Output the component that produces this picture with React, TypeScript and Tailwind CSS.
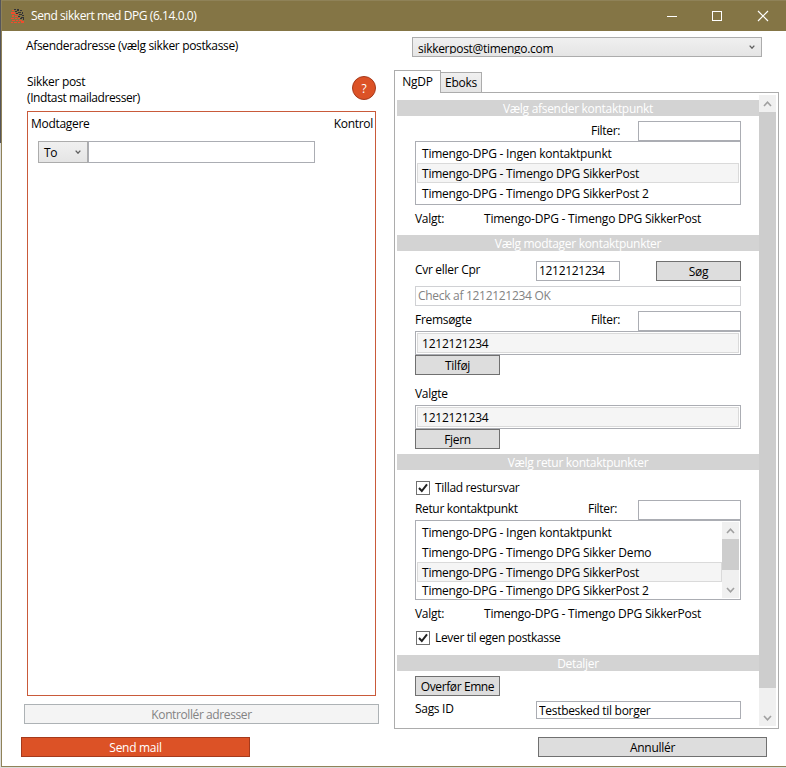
import { useState } from "react";
import type { ReactNode } from "react";

const senders = [
  "Timengo-DPG - Ingen kontaktpunkt",
  "Timengo-DPG - Timengo DPG SikkerPost",
  "Timengo-DPG - Timengo DPG SikkerPost 2",
];

const returns = [
  "Timengo-DPG - Ingen kontaktpunkt",
  "Timengo-DPG - Timengo DPG Sikker Demo",
  "Timengo-DPG - Timengo DPG SikkerPost",
  "Timengo-DPG - Timengo DPG SikkerPost 2",
];

function Chevron({ up = false, small = false }: { up?: boolean; small?: boolean }) {
  return (
    <svg
      width={small ? 6 : 9}
      height={small ? 4 : 6}
      viewBox="0 0 9 6"
      fill="none"
      stroke={small ? "#606060" : "#a0a0a0"}
      strokeWidth={small ? 2 : 1.6}
    >
      <path d={up ? "M1 5 L4.5 1.2 L8 5" : "M1 1 L4.5 4.8 L8 1"} />
    </svg>
  );
}

function Bar({ children }: { children: ReactNode }) {
  return <div className="h-4 w-[362px] shrink-0 bg-[#d3d3d3] text-center leading-[18px] text-white">{children}</div>;
}

function Button({ className, children }: { className: string; children: ReactNode }) {
  return (
    <button className={"flex h-5 shrink-0 items-center justify-center whitespace-nowrap border border-[#707070] bg-[#dddddd] " + className}>
      <span className="pt-px">{children}</span>
    </button>
  );
}

function Input({ className, value = "" }: { className: string; value?: string }) {
  return <input className={"shrink-0 border border-[#abadb3] bg-white px-[2px] outline-none " + className} defaultValue={value} />;
}

function Row({ text, selected, className = "leading-[19px]" }: { text: string; selected: boolean; className?: string }) {
  return (
    <div className={(selected ? "border-[#dadada] bg-[#f5f5f5] " : "border-transparent ") + "h-5 shrink-0 whitespace-nowrap border pl-1 tracking-[-0.22px] " + className}>
      {text}
    </div>
  );
}

function ScrollBar({ className, thumb }: { className: string; thumb: string }) {
  return (
    <div className={"flex w-[17px] shrink-0 flex-col bg-[#f0f0f0] " + className}>
      <div className="flex h-[17px] shrink-0 items-center justify-center"><Chevron up /></div>
      <div className={"bg-[#cdcdcd] " + thumb} />
      <div className="mt-auto flex h-[17px] shrink-0 items-center justify-center"><Chevron /></div>
    </div>
  );
}

function Check({ label }: { label: string }) {
  const [on, setOn] = useState(true);
  return (
    <div className="flex h-[15px] items-center pl-[19px]" onClick={() => setOn(!on)}>
      <svg width="14" height="14" viewBox="0 0 14 14" fill="none">
        <rect x="0.5" y="0.5" width="13" height="13" fill="#fff" stroke="#707070" />
        {on && <path d="M3 7 L5.8 10 L11 3.3" stroke="#212121" strokeWidth="2" />}
      </svg>
      <span className="ml-[5px] tracking-[-0.33px]">{label}</span>
    </div>
  );
}

function TitleBar() {
  return (
    <div className="flex h-[31px] shrink-0 items-center border-t border-[#8f8258] bg-[#847545] text-white">
      <svg className="ml-2" width="16" height="16" viewBox="0 0 16 16">
        <path d="M4 1h2v1H4z M7 1h2v2H7z M10 2h2v1h-2z M5 3h2v1H5z M8 4h3v1H8z M12 4h1v2h-1z M9 6h2v1H9z M12 7h2v1h-2z M8 8h2v1H8z M11 9h3v1h-3z M10 6h2v1h-2z M13 10h1v2h-1z M6 5h2v1H6z M10 10h2v1h-2z" fill="#333236" />
        <path d="M2 2h2v1H2z M1 4h4v2H1z M5 6h3v1H5z M2 7h2v2H2z M5 8h3v1H5z M1 10h3v1H1z M5 10h2v1H5z M8 10h2v1H8z M2 12h3v1H2z M6 12h2v1H6z M9 12h3v1H9z M1 14h2v1H1z M4 14h3v1H4z M8 14h2v1H8z M11 13h3v2h-3z" fill="#f04c2c" />
      </svg>
      <span className="ml-[5px] tracking-[-0.42px]">Send sikkert med DPG (6.14.0.0)</span>
      <svg className="ml-auto mr-[17px]" width="102" height="12" viewBox="0 0 102 12" fill="none" stroke="#fff">
        <path d="M0 6.5 H10" />
        <rect x="45.5" y="1.5" width="9" height="9" />
        <path d="M91 1 L101 11 M101 1 L91 11" strokeWidth="1.2" />
      </svg>
    </div>
  );
}

function Recipients() {
  return (
    <div className="w-[393px] shrink-0">
      <div className="flex h-[50px] pl-[25px]">
        <div className="w-[325px] pt-[13px] leading-4">
          Sikker post<br /><span className="tracking-[-0.4px]">(Indtast mailadresser)</span>
        </div>
        <button className="mt-[15px] h-6 w-6 rounded-full border border-[#a53a1c] bg-[#dc5226] pt-px text-white">?</button>
      </div>
      <div className="ml-[25px] h-[585px] w-[349px] border border-[#c95a3a]">
        <div className="flex justify-between pl-[3px] pr-[2px] pt-1 leading-4">
          <span>Modtagere</span>
          <span>Kontrol</span>
        </div>
        <div className="ml-[10px] mt-[9px] flex">
          <div className="flex h-[22px] w-[50px] items-center justify-between border border-[#acacac] bg-linear-to-b from-[#f0f0f0] to-[#e5e5e5] pl-[5px] pr-[6px]">
            <span className="pt-[2px]">To</span>
            <Chevron small />
          </div>
          <Input className="h-[22px] w-[227px]" />
        </div>
      </div>
      <button className="ml-[22px] mt-2 block h-5 w-[355px] border border-[#adb2b5] bg-[#f4f4f4] pt-px leading-[18px] tracking-[-0.4px] text-[#838383]">
        Kontrollér adresser
      </button>
    </div>
  );
}

function ContactPoints() {
  return (
    <div className="w-[362px]">
      <div className="h-[5px]" />
      <Bar>Vælg afsender kontaktpunkt</Bar>
      <div className="mt-[5px] flex h-5 pl-[194px]">
        <span className="w-[47px] leading-[19px]">Filter:</span>
        <Input className="h-5 w-[103px]" />
      </div>
      <div className="ml-[18px] h-16 w-[326px] border border-[#abadb3] p-px">
        {senders.map((s, i) => <Row key={s} text={s} selected={i === 1} />)}
      </div>
      <div className="flex h-[30px] pl-[18px] leading-7">
        <span className="w-[69px]">Valgt:</span>
        <span className="tracking-[-0.22px]">Timengo-DPG - Timengo DPG SikkerPost</span>
      </div>

      <Bar>Vælg modtager kontaktpunkter</Bar>
      <div className="mt-[10px] flex h-5 pl-[18px]">
        <span className="w-[121px] leading-[18px]">Cvr eller Cpr</span>
        <Input className="h-5 w-[84px] pb-px" value="1212121234" />
        <Button className="ml-9 w-[85px]">Søg</Button>
      </div>
      <div className="ml-[18px] mt-[5px] h-5 w-[326px] border border-[#d0d1d4] pl-[2px] leading-[18px] text-[#838383]">Check af 1212121234 OK</div>
      <div className="mt-[5px] flex h-5 pl-[18px] leading-[18px]">
        <span className="w-[176px]">Fremsøgte</span>
        <span className="w-[47px]">Filter:</span>
        <Input className="h-5 w-[103px]" />
      </div>
      <div className="ml-[18px] h-6 w-[326px] border border-[#abadb3] p-px">
        <Row text="1212121234" selected className="leading-[19px] tracking-[-0.4px]" />
      </div>
      <Button className="ml-[18px] w-[85px]">Tilføj</Button>
      <div className="h-[30px] pl-[18px] pt-[11px] leading-4">Valgte</div>
      <div className="ml-[18px] h-6 w-[326px] border border-[#abadb3] p-px">
        <Row text="1212121234" selected className="leading-[19px] tracking-[-0.4px]" />
      </div>
      <Button className="ml-[18px] w-[85px]">Fjern</Button>

      <div className="h-[5px]" />
      <Bar>Vælg retur kontaktpunkter</Bar>
      <div className="h-[10px]" />
      <Check label="Tillad restursvar" />
      <div className="mt-[5px] flex h-5 pl-[18px] leading-[18px]">
        <span className="w-[173px] tracking-[-0.35px]">Retur kontaktpunkt</span>
        <span className="w-[50px]">Filter:</span>
        <Input className="h-5 w-[103px]" />
      </div>
      <div className="ml-[18px] flex h-20 w-[326px] border border-[#abadb3] p-px">
        <div className="h-[76px] flex-1 overflow-hidden">
          {returns.map((s, i) => <Row key={s} text={s} selected={i === 2} className={i === 3 ? "leading-4" : "leading-[19px]"} />)}
        </div>
        <ScrollBar className="h-[76px]" thumb="h-[31px]" />
      </div>
      <div className="flex h-[30px] pl-[18px] leading-7">
        <span className="w-[69px]">Valgt:</span>
        <span className="tracking-[-0.22px]">Timengo-DPG - Timengo DPG SikkerPost</span>
      </div>
      <Check label="Lever til egen postkasse" />
      <div className="h-[10px]" />

      <Bar>Detaljer</Bar>
      <Button className="ml-[18px] mt-[5px] w-[85px] tracking-[-0.4px]">Overfør Emne</Button>
      <div className="mt-[5px] flex pl-[18px]">
        <span className="w-[121px] leading-4">Sags ID</span>
        <Input className="h-[18px] w-[205px] pt-px" value="Testbesked til borger" />
      </div>
    </div>
  );
}

export default function App() {
  return (
    <div className="flex h-[768px] w-[786px] overflow-hidden bg-[#dcdcdc] font-['Open_Sans','Noto_Sans',sans-serif] text-[12px] tracking-[-0.3px] text-black">
      <div className="w-px shrink-0">
        <div className="h-[143px] bg-[#55555b]" />
        <div className="h-[625px] bg-[#dcdcdc]" />
      </div>
      <div className="flex h-[767px] w-[785px] shrink-0 flex-col border-b border-l border-[#8f8258] bg-white">
        <TitleBar />
        <div className="flex h-[30px] shrink-0 pl-6">
          <span className="w-[386px] pt-[7px] leading-4 tracking-[-0.34px]">Afsenderadresse (vælg sikker postkasse)</span>
          <div className="mt-[6px] flex h-5 w-[350px] justify-between overflow-hidden border border-[#acacac] bg-linear-to-b from-[#f0f0f0] to-[#e5e5e5] pl-[5px] pr-[6px]">
            <span className="h-4 overflow-hidden pt-[3px] leading-4">sikkerpost@timengo.com</span>
            <div className="pt-[7px]"><Chevron small /></div>
          </div>
        </div>
        <div className="flex h-[668px] shrink-0">
          <Recipients />
          <div className="-ml-px w-[385px] pt-[9px]">
            <div className="flex items-end">
              <div className="z-10 -mb-px h-[23px] w-[47px] border border-b-0 border-[#acacac] bg-white text-center leading-[22px]">NgDP</div>
              <div className="-ml-px h-5 w-[42px] border border-b-0 border-[#acacac] bg-linear-to-b from-[#f0f0f0] to-[#e5e5e5] text-center leading-5">Eboks</div>
            </div>
            <div className="flex h-[637px] w-[385px] border border-[#acacac] pl-[2px] pt-[2px]">
              <ContactPoints />
              <ScrollBar className="h-[631px]" thumb="h-[576px]" />
            </div>
          </div>
        </div>
        <div className="mt-2 flex justify-between pl-[19px] pr-[19px]">
          <button className="h-5 w-[229px] border border-[#a53a1c] bg-[#dc5226] pt-px leading-[18px] text-white">Send mail</button>
          <Button className="w-[229px]">Annullér</Button>
        </div>
      </div>
    </div>
  );
}
